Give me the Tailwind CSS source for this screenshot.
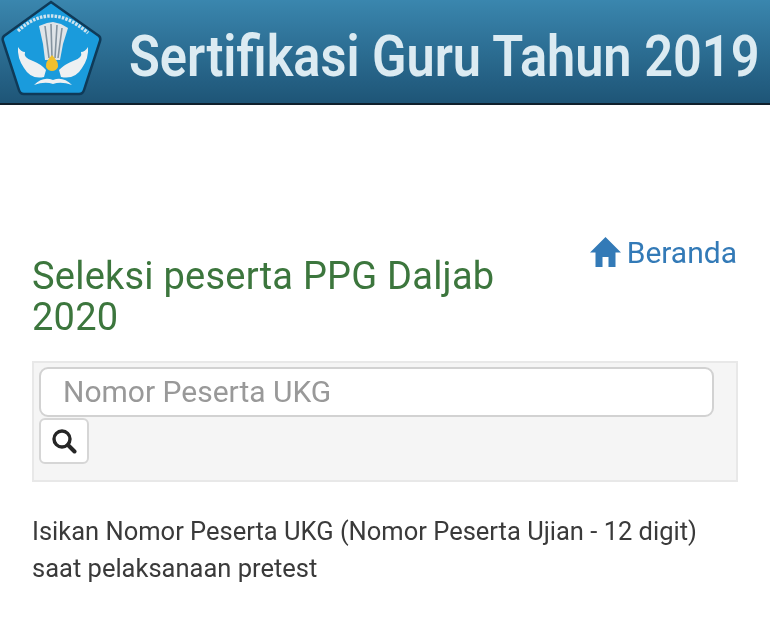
<!DOCTYPE html>
<html><head><script src="https://cdn.jsdelivr.net/npm/@tailwindcss/browser@4"></script></head>
<body class="bg-white font-['Roboto',sans-serif] overflow-hidden">
<div class="w-[770px] h-[644px] overflow-hidden flex flex-col blur-[0.4px]">
<header class="h-[105px] shrink-0 flex items-center bg-gradient-to-b from-[#3a86ae] to-[#1e5577] border-b-2 border-[#10202c]">
  <svg class="w-[102px] h-[100px] ml-px -mt-1 shrink-0 blur-[0.5px]" viewBox="0 0 102 100">
    <path d="M50 2 L98 36 Q100 38 99 41 L83 90 Q82 94 78 94 L23 94 Q19 94 18 90 L2 41 Q1 38 3 36 Z" fill="#1a9bdc" stroke="#0f3a58" stroke-width="2.5"/>
    <path d="M38 26 L46 23 L52 22 L60 24 L67 28 L62 44 L59 60 L44 60 L42 44 Z" fill="#dfe4e8"/>
    <path d="M44 26 L48 58 M50 24 L51 58 M56 25 L54 58 M61 28 L57 58" stroke="#84939f" stroke-width="1.6" fill="none"/>
    <path d="M17 47 Q20 52 24 52 Q22 58 32 61 Q40 64 45 70 L43 77 Q30 80 23 68 Q16 58 17 47Z M87 47 Q84 52 80 52 Q82 58 72 61 Q64 64 58 70 L60 77 Q74 80 81 68 Q88 58 87 47Z" fill="#eef0f2"/>
    <path d="M33 85 Q42 76 52 80 Q62 76 71 85 Q60 81 52 84 Q44 81 33 85Z" fill="#eef0f2"/>
    <path d="M51 55 Q58 62 57 67 Q55 71 51 71 Q47 71 45 67 Q44 62 51 55Z" fill="#efc02e"/>
    <path d="M17 31 Q50 0 87 33" fill="none" stroke="#cfe3ee" stroke-width="3.4" stroke-dasharray="2.5 1.2"/>
  </svg>
  <h1 class="ml-[26px] mt-[12px] text-[50.5px] leading-none font-semibold text-[#dcebf2] whitespace-nowrap scale-y-[1.12]">Sertifikasi Guru Tahun 2019</h1>
</header>
<main class="px-[32px] pt-[130px]">
  <div class="flex justify-between items-start">
    <h2 class="w-[500px] mt-[21px] text-[38px] leading-[41px] text-[#3c763d] tracking-[0.23px]">Seleksi peserta PPG Daljab 2020</h2>
    <a class="flex items-center gap-[5px] pr-px mt-[2px] text-[30px] leading-[32px] text-[#337ab7] whitespace-nowrap">
      <svg class="w-[33px] h-[32px] -mt-[3px] shrink-0" viewBox="0 0 33 32"><path d="M16.5 1 L32 16.5 L26.5 16.5 L26.5 31 L19.5 31 L19.5 21 L13.5 21 L13.5 31 L6.5 31 L6.5 16.5 L1 16.5 Z" fill="#337ab7"/></svg>
      Beranda
    </a>
  </div>
  <form class="mt-[23px] h-[121px] bg-[#f5f5f5] border-2 border-[#e8e8e8] pt-[4px] pl-[5px] pr-[22px]">
    <div class="h-[50px] w-[675px] bg-white border-2 border-[#d2d2d2] rounded-[9px] flex items-center pl-[22px] pb-[2px] text-[30px] text-[#999999]">Nomor Peserta UKG</div>
    <button class="mt-px w-[50px] h-[46px] bg-white border-2 border-[#d6d6d6] rounded-[6px] flex items-center justify-center">
      <svg class="w-[26px] h-[26px]" viewBox="0 0 26 26" fill="none" stroke="#262626"><circle cx="11" cy="11" r="8" stroke-width="3.4"/><path d="M17 17 L23.5 23.5" stroke-width="4" stroke-linecap="round"/></svg>
    </button>
  </form>
  <p class="mt-[31px] text-[25.5px] leading-[37px] text-[#3a3a3a] w-[700px]">Isikan Nomor Peserta UKG (Nomor Peserta Ujian - 12 digit) saat pelaksanaan pretest</p>
</main>
</div>
</body></html>
